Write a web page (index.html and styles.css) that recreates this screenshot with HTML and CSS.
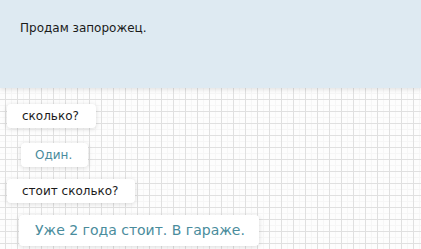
FILE: index.html
```html
<!DOCTYPE html>
<html lang="ru">
<head>
<meta charset="utf-8">
<title>chat</title>
<link rel="stylesheet" href="styles.css">
</head>
<body>
<div class="topic">
	<p>Продам запорожец.</p>
</div>
<div class="thread">
	<div class="msg">сколько?</div>
	<div class="msg reply first">Один.</div>
	<div class="msg">стоит сколько?</div>
	<div class="msg reply big">Уже 2 года стоит. В гараже.</div>
</div>
</body>
</html>
```

FILE: styles.css
```css
html, body {margin: 0; padding: 0;}
body {
	font-family: "DejaVu Sans", Verdana, sans-serif;
	font-size: 12px;
	color: #1a1a1a;
	height: 249px;
	overflow: hidden;
	background-color: #fdfdfd;
	background-image:
		linear-gradient(#e0e0e0 1px, transparent 1px),
		linear-gradient(90deg, #e0e0e0 1px, transparent 1px),
		linear-gradient(#f6f6f6 1px, transparent 1px),
		linear-gradient(90deg, #f6f6f6 1px, transparent 1px);
	background-size: 12px 12px, 12px 12px, 6px 6px, 6px 6px;
	background-position: 0 3px, 5px 0, 0 3px, 5px 0;
}
.topic {
	height: 88px;
	background: #deeaf2;
	box-shadow: 0 2px 4px rgba(0,0,0,0.10);
	padding: 0 20px;
	box-sizing: border-box;
}
.topic p {
	margin: 0;
	padding-top: 20px;
	line-height: 16px;
}
.thread {
	display: flex;
	flex-direction: column;
	align-items: flex-start;
	gap: 12px;
	padding: 16px 0 0 7px;
}
.msg {
	background: #fff;
	border-radius: 4px;
	box-shadow: 0 1px 5px rgba(0,0,0,0.14);
	padding: 0 17px 0 15px;
	height: 24px;
	line-height: 24px;
	white-space: nowrap;
}
.reply {
	margin-left: 14px;
	color: #4a8c9c;
	padding: 0 16px 0 14px;
}
.first {
	margin-top: 3px;
}
.big {
	margin-left: 12px;
	height: 31px;
	line-height: 31px;
	font-size: 14px;
	padding: 0 14px 0 16px;
}
```
